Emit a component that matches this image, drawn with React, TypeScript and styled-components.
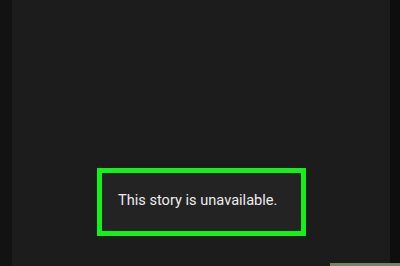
import React from "react";
import styled, { createGlobalStyle } from "styled-components";

const GlobalStyle = createGlobalStyle`
  html, body {
    margin: 0;
    padding: 0;
    background: #111111;
    font-family: Roboto, "Liberation Sans", sans-serif;
  }
`;

const Screen = styled.div`
  position: relative;
  display: flex;
  width: 400px;
  height: 266px;
  overflow: hidden;
  background: #111111;
`;

const Edge = styled.div<{ $w: number; $bg: string }>`
  flex: 0 0 ${({ $w }) => $w}px;
  background: ${({ $bg }) => $bg};
`;

const Panel = styled.div`
  flex: 1;
  display: flex;
  flex-direction: column;
  background: #1c1c1c;
  padding: 168px 0 0 85px;
`;

const Notice = styled.div`
  box-sizing: border-box;
  width: 209px;
  height: 68px;
  border: 5px solid #14f01a;
  background: #232323;
  display: flex;
  align-items: center;
  padding: 0 0 4px 16px;
`;

const NoticeText = styled.span`
  color: #ececec;
  font-size: 14.6px;
  line-height: 17px;
`;

const CornerButton = styled.div`
  position: absolute;
  left: 330px;
  right: 0;
  bottom: 0;
  height: 3px;
  background: #73865a;
`;

export default function App() {
  return (
    <>
      <GlobalStyle />
      <Screen>
        <Edge $w={12} $bg="#121212" />
        <Panel>
          <Notice>
            <NoticeText>This story is unavailable.</NoticeText>
          </Notice>
        </Panel>
        <Edge $w={10} $bg="#0e0e0e" />
        <CornerButton />
      </Screen>
    </>
  );
}
